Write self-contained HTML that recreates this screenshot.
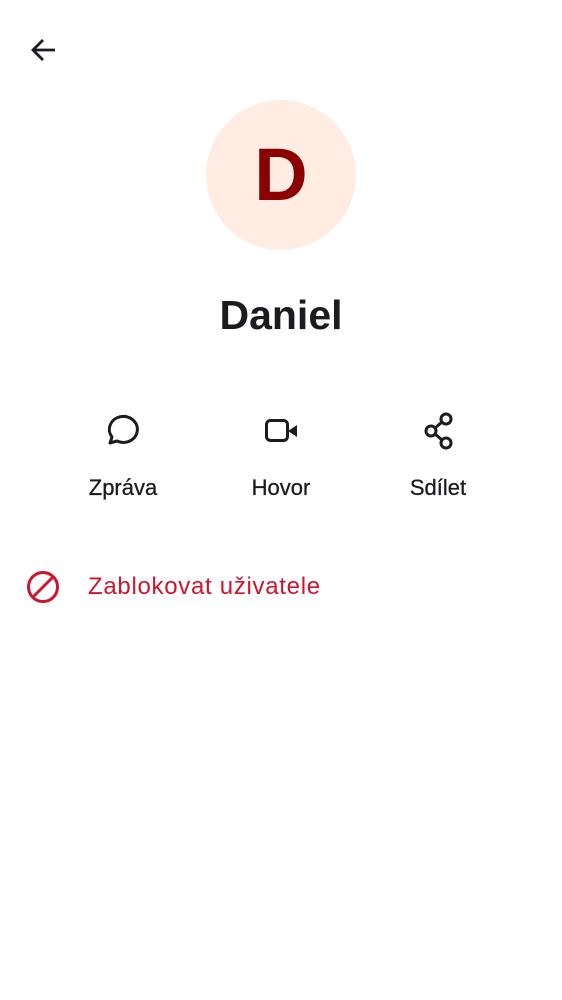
<!DOCTYPE html>
<html><head><meta charset="utf-8"><style>
body{margin:0;width:562px;height:1000px;background:#fff;font-family:"Liberation Sans",sans-serif;position:relative;overflow:hidden;color:#1d1b20}
.a{position:absolute}
.lbl{position:absolute;top:475px;width:160px;text-align:center;font-size:22px;line-height:26px;-webkit-text-stroke:0.3px #1d1b20}
</style></head><body>
<svg class="a" style="left:29px;top:36px" width="28" height="28" viewBox="0 0 28 28"><path d="M26 14H4M14 4L4 14l10 10" fill="none" stroke="#1d1b20" stroke-width="2.8"/></svg>
<div class="a" style="left:206px;top:100px;width:150px;height:150px;border-radius:50%;background:#ffede4;text-align:center;line-height:150px;font-size:74px;font-weight:bold;color:#8b0000">D</div>
<div class="a" style="left:0;top:288px;width:562px;text-align:center;font-size:41px;font-weight:bold;line-height:54px">Daniel</div>
<svg class="a" style="left:106px;top:414px" width="34" height="34" viewBox="0 0 34 34"><path d="M4 29L6 23A14 13 0 1 1 11 27Z" fill="none" stroke="#1d1b20" stroke-width="3" stroke-linejoin="round"/></svg>
<svg class="a" style="left:264px;top:414px" width="36" height="34" viewBox="0 0 36 34"><rect x="2.5" y="6.5" width="21" height="20" rx="4" fill="none" stroke="#1d1b20" stroke-width="3"/><path d="M24 17l9-6v12z" fill="#1d1b20"/></svg>
<svg class="a" style="left:422px;top:412px" width="34" height="38" viewBox="0 0 34 38"><circle cx="24" cy="7" r="5" fill="none" stroke="#1d1b20" stroke-width="3"/><circle cx="9" cy="19" r="5" fill="none" stroke="#1d1b20" stroke-width="3"/><circle cx="24" cy="31" r="5" fill="none" stroke="#1d1b20" stroke-width="3"/><path d="M13 16l7-6M13 22l7 6" stroke="#1d1b20" stroke-width="3"/></svg>
<div class="lbl" style="left:43px">Zpráva</div>
<div class="lbl" style="left:201px">Hovor</div>
<div class="lbl" style="left:358px">Sdílet</div>
<svg class="a" style="left:26px;top:570px" width="34" height="34" viewBox="0 0 34 34"><circle cx="17" cy="17" r="14.5" fill="none" stroke="#d0142c" stroke-width="3"/><path d="M7 27L27 7" stroke="#d0142c" stroke-width="3"/></svg>
<div class="a" style="left:88px;top:573px;font-size:24px;line-height:28px;letter-spacing:0.7px;color:#d0142c">Zablokovat uživatele</div>
</body></html>
